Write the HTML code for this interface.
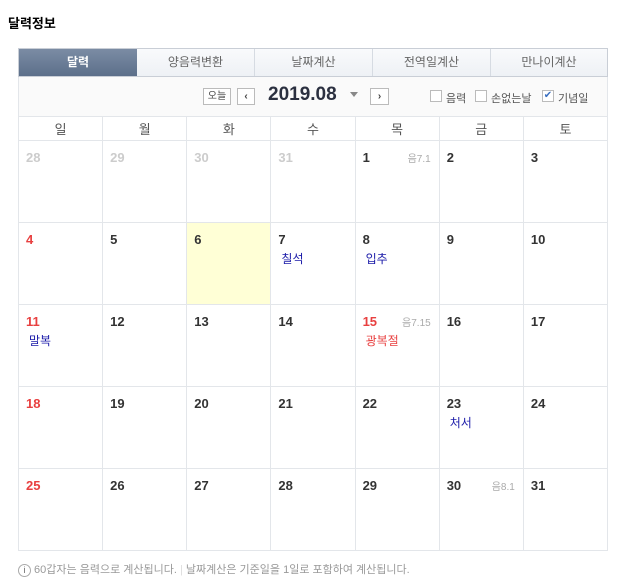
<!DOCTYPE html>
<html><head><meta charset="utf-8"><style>
*{margin:0;padding:0;box-sizing:border-box}
body{width:629px;height:573px;background:#fff;font-family:"Liberation Sans","Noto Sans CJK KR",sans-serif;position:relative;overflow:hidden;color:#333}
.abs{position:absolute}
h1{position:absolute;left:8px;top:13px;font-size:13px;font-weight:bold;color:#000}
.tabs{left:18px;top:48px;width:590px;height:29px;border:1px solid #c9ced6;display:flex;background:linear-gradient(#f9fafc,#eef1f5)}
.tabs div{flex:none;text-align:center;line-height:27px;font-size:12px;color:#666;border-left:1px solid #d6dbe2}
.tabs .on{background:linear-gradient(#7b8ca4,#5c6f8a);color:#fff;font-weight:bold;border-left:none}
.bar{left:18px;top:77px;width:590px;height:40px;border-left:1px solid #e3e6ea;border-right:1px solid #e3e6ea;background:#fafafa}
.btn{position:absolute;border:1px solid #bbb;background:#fff;font-size:10px;color:#444;text-align:center;line-height:15px;height:17px}
.cb{position:absolute;width:12px;height:12px;border:1px solid #bbb;background:#fff}
.lbl{position:absolute;font-size:11px;color:#555}
table{position:absolute;left:18px;top:116px;border-collapse:collapse;width:590px}
th{height:24px;font-size:13px;font-weight:normal;color:#555;border:1px solid #e3e6ea;background:#fff}
td{height:82px;width:84px;border:1px solid #e3e6ea;vertical-align:top;position:relative;padding:9px 0 0 7px;font-size:13px;font-weight:bold;color:#333}
td .e{display:block;font-weight:normal;font-size:12px;color:#1a1aa8;margin:3px 0 0 3px}
td .l{position:absolute;right:8px;top:9px;font-size:10px;font-weight:normal;color:#aaa}
.g{color:#ccc}.r{color:#e84040}
.foot{left:18px;top:561px;font-size:11px;color:#999}
</style></head><body>
<h1>달력정보</h1>
<div class="abs tabs">
<div class="on" style="width:118px">달력</div>
<div style="width:117px;border-left:none">양음력변환</div>
<div style="width:118px">날짜계산</div>
<div style="width:118px">전역일계산</div>
<div style="width:117px">만나이계산</div>
</div>
<div class="abs bar">
<div class="btn" style="left:184px;top:11px;width:28px">오늘</div>
<div class="btn" style="left:218px;top:11px;width:18px;font-weight:bold">‹</div>
<div style="position:absolute;left:249px;top:7px;font-size:19px;font-weight:bold;color:#2b3040">2019.08</div>
<div style="position:absolute;left:331px;top:15px;width:0;height:0;border:4px solid transparent;border-top:5px solid #888"></div>
<div class="btn" style="left:351px;top:11px;width:19px;font-weight:bold">›</div>
<div class="cb" style="left:411px;top:13px"></div><div class="lbl" style="left:427px;top:13px">음력</div>
<div class="cb" style="left:456px;top:13px"></div><div class="lbl" style="left:472px;top:13px">손없는날</div>
<div class="cb" style="left:523px;top:13px;color:#3a6fc0;font-size:10px;line-height:10px;text-align:center">✔</div><div class="lbl" style="left:539px;top:13px">기념일</div>
</div>
<table>
<tr><th>일</th><th>월</th><th>화</th><th>수</th><th>목</th><th>금</th><th>토</th></tr>
<tr><td class="g">28</td><td class="g">29</td><td class="g">30</td><td class="g">31</td><td>1<span class="l">음7.1</span></td><td>2</td><td>3</td></tr>
<tr><td class="r">4</td><td>5</td><td style="background:#ffffd6">6</td><td>7<span class="e">칠석</span></td><td>8<span class="e">입추</span></td><td>9</td><td>10</td></tr>
<tr><td class="r">11<span class="e">말복</span></td><td>12</td><td>13</td><td>14</td><td class="r">15<span class="l">음7.15</span><span class="e" style="color:#e84040">광복절</span></td><td>16</td><td>17</td></tr>
<tr><td class="r">18</td><td>19</td><td>20</td><td>21</td><td>22</td><td>23<span class="e">처서</span></td><td>24</td></tr>
<tr><td class="r">25</td><td>26</td><td>27</td><td>28</td><td>29</td><td>30<span class="l">음8.1</span></td><td>31</td></tr>
</table>
<div class="abs foot"><span style="display:inline-block;width:13px;height:13px;border:1px solid #aaa;border-radius:50%;text-align:center;font-size:9px;line-height:11px;color:#666">i</span> 60갑자는 음력으로 계산됩니다. <span style="color:#ddd">|</span> 날짜계산은 기준일을 1일로 포함하여 계산됩니다.</div>
</body></html>
